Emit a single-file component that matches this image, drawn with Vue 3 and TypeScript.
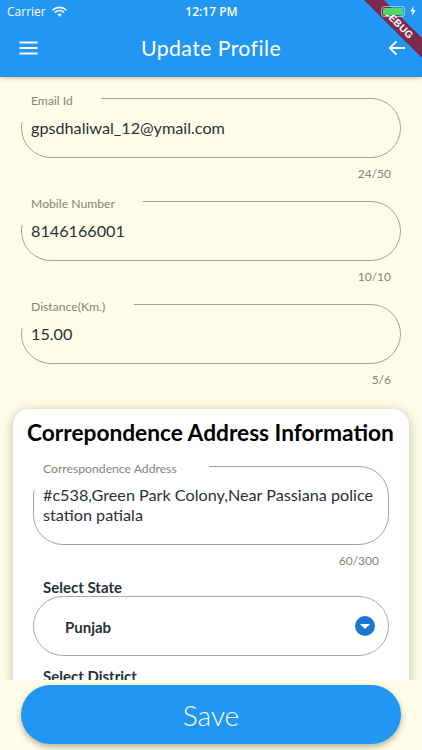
<script setup lang="ts">
const fields = [
  { label: 'Email Id', value: 'gpsdhaliwal_12@ymail.com', count: '24/50', notch: 82 },
  { label: 'Mobile Number', value: '8146166001', count: '10/10', notch: 124 },
  { label: 'Distance(Km.)', value: '15.00', count: '5/6', notch: 115 },
]
</script>

<template>
  <div class="screen">
    <header class="appbar">
      <div class="status">
        <div class="status-left">
          <span>Carrier</span>
          <svg width="15" height="11" viewBox="0 0 15 11" fill="none" stroke="#fff" stroke-linecap="round">
            <path d="M1 3.8C4.6 .5 10.4 .5 14 3.800" stroke-width="1.6" />
            <path d="M3.400 6.100C5.700 4 9.300 4 11.600 6.100" stroke-width="1.6" />
            <path d="M7.500 10.400 5.600 8.300C6.700 7.400 8.300 7.400 9.400 8.300Z" fill="#fff" stroke-width=".4" />
          </svg>
        </div>
        <span class="clock">12:17 PM</span>
        <div class="status-right">
          <span class="battery"><i></i></span>
          <svg width="6" height="10" viewBox="0 0 6 10"><path d="M3.600 0 .3 5.600h2.200L2.100 10l3.500-6H3.300Z" fill="#fff" /></svg>
        </div>
      </div>
      <div class="toolbar">
        <svg class="tool-icon start" width="20" height="14" viewBox="0 0 20 14" fill="none" stroke="#fff" stroke-width="2">
          <path d="M.5 1.500h18M.5 7h18M.5 12.500h18" />
        </svg>
        <h1>Update Profile</h1>
        <svg class="tool-icon end" width="18" height="16" viewBox="0 0 18 16" fill="none" stroke="#fff" stroke-width="1.9">
          <path d="M17 8H2M8.500 1.300 1.800 8l6.700 6.700" />
        </svg>
      </div>
      <div class="ribbon">DEBUG</div>
    </header>

    <main class="content">
      <section class="plain-fields">
        <div v-for="f in fields" :key="f.label" class="field-wrap">
          <div class="field">
            <span class="patch" :style="{ width: f.notch + 'px' }"></span>
            <label>{{ f.label }}</label>
            <span class="value">{{ f.value }}</span>
          </div>
          <div class="counter">{{ f.count }}</div>
        </div>
      </section>

      <section class="card">
        <h2>Correpondence Address Information</h2>
        <div class="field-wrap">
          <div class="field tall">
            <span class="patch white" :style="{ width: '178px' }"></span>
            <label>Correspondence Address</label>
            <span class="value">#c538,Green Park Colony,Near Passiana police station patiala</span>
          </div>
          <div class="counter">60/300</div>
        </div>
        <div class="select-label state">Select State</div>
        <div class="select">
          <span class="select-value">Punjab</span>
          <span class="chev"><i></i></span>
        </div>
        <div class="select-label district">Select District</div>
      </section>
    </main>

    <footer class="footer">
      <button type="button" class="save">Save</button>
    </footer>
  </div>
</template>

<style scoped>
.screen {
  width: 422px;
  height: 750px;
  display: flex;
  flex-direction: column;
  overflow: hidden;
  background: #fffde7;
  font-family: Lato, "Open Sans", sans-serif;
  position: relative;
}
.appbar {
  height: 77px;
  flex: none;
  background: #2196f3;
  color: #fff;
  position: relative;
  overflow: hidden;
  box-shadow: 0 1px 4px rgba(0, 0, 0, 0.25);
  z-index: 2;
}
.status {
  height: 22px;
  padding: 0 6px 0 7px;
  display: grid;
  grid-template-columns: 1fr auto 1fr;
  align-items: center;
  font-family: "Open Sans", sans-serif;
  font-size: 12px;
  position: relative;
  z-index: 1;
}
.status-left {
  display: flex;
  align-items: center;
  gap: 6px;
}
.clock {
  font-weight: 600;
  font-size: 12px;
}
.status-right {
  display: flex;
  justify-content: flex-end;
  align-items: center;
  gap: 5px;
}
.battery {
  width: 24px;
  height: 11px;
  border: 1px solid rgba(255, 255, 255, 0.55);
  border-radius: 3px;
  padding: 1px;
  box-sizing: border-box;
  display: block;
}
.battery i {
  display: block;
  height: 100%;
  background: #4cd964;
  border-radius: 1px;
}
.toolbar {
  height: 55px;
  padding: 0 16px 4px;
  box-sizing: border-box;
  display: grid;
  grid-template-columns: 1fr auto 1fr;
  align-items: center;
}
.tool-icon {
  display: block;
}
.tool-icon.start {
  margin-left: 3px;
}
.tool-icon.end {
  justify-self: end;
}
h1 {
  margin: 0;
  font-family: Lato, sans-serif;
  font-weight: 400;
  font-size: 21.300px;
  letter-spacing: 0.4px;
}
.ribbon {
  position: absolute;
  top: 17px;
  right: -26px;
  width: 100px;
  height: 14px;
  line-height: 14px;
  text-align: center;
  background: #7d2a4c;
  color: #fff;
  font-family: "Liberation Sans", sans-serif;
  font-size: 10px;
  font-weight: 700;
  letter-spacing: 0.3px;
  transform: rotate(45deg);
}
.content {
  flex: 1;
  min-height: 0;
  overflow: hidden;
  display: flex;
  flex-direction: column;
}
.plain-fields {
  padding: 21px 21px 0;
  display: flex;
  flex-direction: column;
  gap: 4px;
}
.field-wrap {
  display: flex;
  flex-direction: column;
}
.field {
  position: relative;
  height: 60px;
  box-sizing: border-box;
  border: 1px solid #a3a299;
  border-radius: 30px;
  padding: 18px 9px 0;
  color: #263238;
  font-size: 16.200px;
  line-height: 21px;
}
.patch {
  position: absolute;
  left: -3px;
  top: -3px;
  height: 26px;
  background: #fffde7;
}
.patch.white {
  background: #fff;
}
.field label {
  position: absolute;
  left: 9px;
  top: -6px;
  font-size: 12.200px;
  line-height: 15px;
  color: #85847c;
}
.value {
  position: relative;
}
.counter {
  height: 39px;
  padding: 8px 10px 0 0;
  box-sizing: border-box;
  text-align: right;
  font-size: 12px;
  line-height: 15px;
  color: #85847c;
}
.card {
  margin: 6px 13px 0;
  padding: 9px 20px 0;
  background: #fff;
  border-radius: 16px 16px 0 0;
  box-shadow: 0 2px 12px rgba(70, 70, 30, 0.35);
  flex: 1;
}
h2 {
  margin: 0 0 19px -6px;
  font-size: 22.700px;
  line-height: 29px;
  font-weight: 700;
  color: #000;
  white-space: nowrap;
}
.tall {
  height: 79px;
  line-height: 20px;
}
.card .counter {
  height: 31px;
}
.select-label {
  font-size: 15px;
  line-height: 20px;
  font-weight: 700;
  color: #263238;
  padding-left: 10px;
}
.select {
  height: 60px;
  box-sizing: border-box;
  border: 1px solid #aaa;
  border-radius: 30px;
  display: flex;
  align-items: center;
  justify-content: space-between;
  padding: 0 13px 0 31px;
  font-size: 15px;
  font-weight: 700;
  color: #263238;
}
.select-value {
  padding-top: 2px;
}
.select-label.state {
  height: 19px;
  margin-top: 1px;
}
.select-label.district {
  margin-top: 10px;
}
.chev {
  width: 20px;
  height: 20px;
  border-radius: 50%;
  background: #1976d2;
  display: flex;
  align-items: center;
  justify-content: center;
}
.chev i {
  width: 0;
  height: 0;
  border-left: 5px solid transparent;
  border-right: 5px solid transparent;
  border-top: 5px solid #fff;
}
.footer {
  height: 70px;
  flex: none;
  background: #fffde7;
  padding: 5px 21px 6px;
  box-sizing: border-box;
  position: relative;
  z-index: 1;
}
.save {
  display: block;
  width: 100%;
  height: 59px;
  border: 0;
  border-radius: 30px;
  background: #2196f3;
  color: #fff;
  font-family: Lato, sans-serif;
  font-weight: 300;
  font-size: 28px;
  box-shadow: 0 3px 6px rgba(70, 70, 40, 0.4);
}
</style>
